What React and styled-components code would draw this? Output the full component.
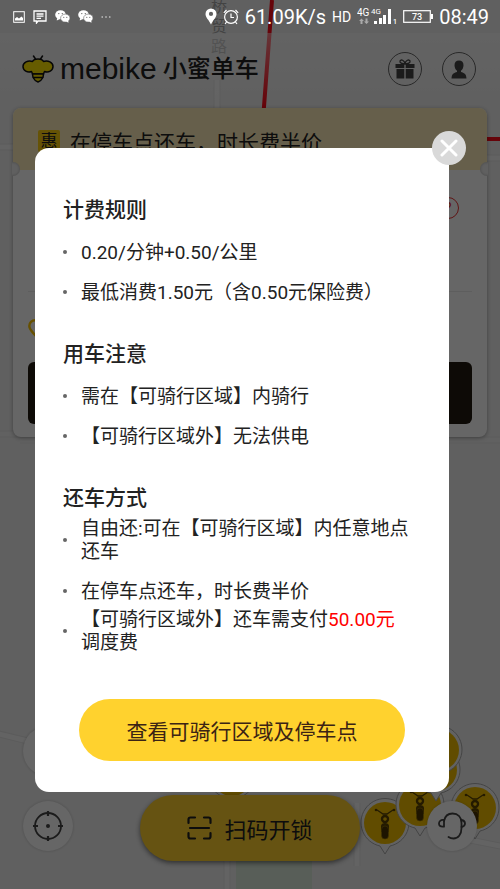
import React from 'react'
import styled, { createGlobalStyle } from 'styled-components'


const GlobalStyle = createGlobalStyle`
  * {
    box-sizing: border-box;
  }

  body {
    margin: 0;
    font-family: Roboto, "Noto Sans CJK SC", sans-serif;
    color: #222222;
    text-spacing-trim: space-all;
  }

  button {
    border: 0;
    padding: 0;
    background: none;
    font-family: inherit;
    color: inherit;
    cursor: pointer;
  }

  svg {
    display: block;
    flex: none;
  }
`

const Screen = styled.div`
  position: relative;
  display: flex;
  flex-direction: column;
  min-height: 100vh;
  overflow: hidden;
  background-color: #f0f0f0;
`

const MapLayer = styled.div`
  position: absolute;
  inset: 0;

  svg {
    width: 100%;
    height: 100%;
  }
`

const StatusBar = styled.div`
  position: relative;
  z-index: 3;
  display: flex;
  align-items: center;
  justify-content: space-between;
  height: 33px;
  padding: 0 11px 0 13px;
  color: #ffffff;
`

const StatusGroup = styled.div`
  display: flex;
  align-items: center;
  gap: ${props => props.$gap}px;
`

const StatusText = styled.span`
  font-size: ${props => props.$size || 20}px;
  line-height: 24px;
`

const Header = styled.header`
  position: relative;
  display: flex;
  align-items: center;
  justify-content: space-between;
  height: 72px;
  padding: 0 24px 0 22px;
  background: linear-gradient(rgba(255, 255, 255, 0.5), rgba(255, 255, 255, 0));
`

const Brand = styled.div`
  display: flex;
  align-items: center;
  gap: 6px;
`

const BrandName = styled.span`
  font-family: "Liberation Sans", sans-serif;
  font-size: 30px;
  line-height: 32px;
`

const BrandLabel = styled.span`
  font-size: 24px;
  font-weight: 500;
  line-height: 32px;
`

const HeaderActions = styled.div`
  display: flex;
  gap: 20px;
`

const RoundButton = styled.button`
  display: flex;
  align-items: center;
  justify-content: center;
  width: 34px;
  height: 34px;
  border: 1px solid #666666;
  border-radius: 50%;
`

const TripCard = styled.section`
  position: relative;
  height: 329px;
  margin: 3px 13px 0;
  border-radius: 8px;
  background-color: #ffffff;
  box-shadow: 0 1px 4px rgba(0, 0, 0, 0.35);
`

const Promo = styled.div`
  display: flex;
  align-items: center;
  gap: 10px;
  height: 62px;
  padding: 4px 25px 0;
  border-radius: 8px 8px 0 0;
  background-color: #ffeebc;
  font-size: 21px;
`

const PromoBadge = styled.span`
  width: 22px;
  height: 22px;
  border-radius: 2px;
  background-color: #ffcf10;
  font-size: 17px;
  line-height: 22px;
  text-align: center;
`

const Notch = styled.span`
  position: absolute;
  top: 54px;
  ${props => props.$side}: -7px;
  width: 14px;
  height: 14px;
  border-radius: 50%;
  background-color: #f0f0f0;
  box-shadow: inset 0 0 3px rgba(0, 0, 0, 0.25);
  clip-path: inset(0 ${props => (props.$side === 'right' ? '6px 0 0' : '0 0 6px')});
`

const TripBody = styled.div`
  display: flex;
  flex-direction: column;
  align-items: stretch;
  height: 267px;
  padding: 27px 15px 13px;
`

const HelpButton = styled.button`
  align-self: flex-end;
  width: 22px;
  height: 22px;
  margin-right: 13px;
  border: 1px solid #ee3333;
  border-radius: 50%;
  color: #ee3333;
  font-size: 15px;
  line-height: 20px;
`

const Divider = styled.hr`
  width: 100%;
  margin: 72px 0 27px;
  border: 0;
  border-top: 1px solid #eaeaea;
`

const TripButton = styled.button`
  height: 62px;
  margin-top: auto;
  border-radius: 6px;
  background-color: #221a10;
`

const BottomBar = styled.footer`
  position: relative;
  display: flex;
  align-items: flex-end;
  justify-content: space-between;
  margin-top: auto;
  padding: 0 23px 28px;
`

const SideTools = styled.div`
  display: flex;
  flex-direction: column;
  gap: 25px;
  padding-bottom: 10px;
`

const ToolButton = styled.button`
  display: flex;
  align-items: center;
  justify-content: center;
  width: 50px;
  height: 50px;
  border-radius: 50%;
  background-color: #ffffff;
  box-shadow: 0 0 3px rgba(0, 0, 0, 0.2);
`

const ScanButton = styled.button`
  display: flex;
  align-items: center;
  justify-content: center;
  gap: 12px;
  width: 220px;
  height: 66px;
  border-radius: 33px;
  background-color: #ffd02e;
  box-shadow: 0 2px 5px rgba(0, 0, 0, 0.5);
  font-size: 22px;
`

const Overlay = styled.div`
  position: absolute;
  inset: 0;
  z-index: 2;
  padding: 148px 51px 0 35px;
  background-color: rgba(0, 0, 0, 0.6);
`

const Dialog = styled.div`
  position: relative;
  padding: 40px 0 31px;
  border-radius: 14px;
  background-color: #ffffff;
`

const CloseButton = styled.button`
  position: absolute;
  top: -17px;
  right: -17px;
  display: flex;
  align-items: center;
  justify-content: center;
  width: 34px;
  height: 34px;
  border-radius: 50%;
  background-color: #d9d9d9;
`

const RuleSection = styled.section`
  padding: 0 36px 0 28px;

  & + & {
    margin-top: 20px;
  }
`

const RuleTitle = styled.h2`
  margin: 0;
  font-size: 21px;
  font-weight: 500;
  line-height: 44px;
`

const RuleList = styled.ul`
  margin: 0;
  padding: 0;
  list-style: none;
`

const RuleItem = styled.li`
  display: flex;
  align-items: center;
  height: 40px;
  margin-bottom: ${props => (props.$spaced ? 11 : 0)}px;
  font-size: 19px;
  line-height: 23px;

  &::before {
    content: "";
    flex: none;
    width: 4px;
    height: 4px;
    margin-right: 14px;
    border-radius: 50%;
    background-color: #666666;
  }
`

const Fee = styled.span`
  color: #ff0000;
`

const AreaButton = styled.button`
  display: block;
  width: calc(100% - 88px);
  height: 62px;
  margin: 48px 44px 0;
  border-radius: 31px;
  background-color: #ffd22e;
  color: #3b2314;
  font-size: 21px;
`

const PINS = [
  { x: 232, y: 775 },
  { x: 475, y: 808 },
  { x: 385, y: 823 },
  { x: 420, y: 805 },
  { x: 436, y: 770 },
  { x: 438, y: 750 },
]

const BikePin = ({ x, y }) => (
  <g transform={`translate(${x} ${y})`}>
    <path
      d="M-5 23 L0 31 L5 23 A24 24 0 1 0 -5 23Z"
      fill="#f4f4f4"
      stroke="#aaaaaa"
      strokeWidth="1"
    />
    <circle r="21" fill="#f2bf00" />
    <g fill="none" stroke="#5a4300" strokeWidth="1.3">
      <path d="M-8 -13 L-5 -11 L-2 -9 H2 L5 -11 L8 -13" />
      <circle r="3" cy="-4" strokeWidth="2.4" />
    </g>
    <circle cx="-9" cy="-13" r="1.3" fill="#5a4300" />
    <circle cx="9" cy="-13" r="1.3" fill="#5a4300" />
    <path d="M-4 3 C-4 -1 4 -1 4 3 L4 9 H-4Z" fill="#5a4300" />
    <rect x="-3.5" y="3" width="7" height="13" rx="3.5" fill="#4a3200" stroke="#a07c00" strokeWidth="0.6" />
  </g>
)

const MapArt = () => (
  <svg viewBox="0 0 500 889" preserveAspectRatio="xMidYMid slice" aria-hidden="true">
    <rect x="236" y="858" width="76" height="31" fill="#dcebdc" />
    <g fill="none" stroke="#e4e4e4" strokeWidth="7">
      <path d="M217 80 V120" />
      <path d="M0 147 H20" />
      <path d="M480 158 H500" />
      <path d="M0 434 H20 M20 440 H500" />
      <path d="M-5 733 L40 744" />
      <path d="M227 850 V889" />
      <path d="M357 803 V866" />
      <path d="M470 840 L505 847" />
    </g>
    <g fill="none" stroke="#f8f8f8" strokeWidth="5">
      <path d="M217 80 V120" />
      <path d="M0 147 H20" />
      <path d="M480 158 H500" />
      <path d="M-5 733 L40 744" />
      <path d="M227 850 V889" />
      <path d="M357 803 V866" />
      <path d="M470 840 L505 847" />
    </g>
    <path d="M0 434 H20 M20 440 H500" fill="none" stroke="#f2f2f2" strokeWidth="5" />
    <path d="M272 0 L263 120 M480 139 H500" fill="none" stroke="#ff0a1a" strokeWidth="4" />
    {PINS.map(pin => (
      <BikePin key={`${pin.x}-${pin.y}`} {...pin} />
    ))}
  </svg>
)

const RoadName = styled.span`
  position: absolute;
  top: -3px;
  left: 211px;
  width: 16px;
  color: #a8a8a8;
  font-size: 16px;
  line-height: 20px;
`

const PictureIcon = () => (
  <svg width="12" height="12" viewBox="0 0 12 12" fill="none" stroke="#fff">
    <rect x="0.7" y="0.7" width="10.6" height="10.6" />
    <path d="M2 9.5 V7.5 L4 6 L6 7.5 L8.5 5.5 L10 7 V9.5Z" fill="#fff" stroke="none" />
  </svg>
)

const MessageIcon = () => (
  <svg width="14" height="14" viewBox="0 0 14 14" fill="none" stroke="#fff" strokeWidth="1.3">
    <path d="M1 1 H13 V11 H5 L3.5 13 V11 H1Z M3.5 4 H10.5 M3.5 6.2 H10.5 M3.5 8.4 H8" />
  </svg>
)

const WechatIcon = () => (
  <svg width="15" height="13" viewBox="0 0 15 13">
    <ellipse cx="5.5" cy="4.7" rx="5.3" ry="4.5" fill="#fff" />
    <path d="M2 8 L1.8 10.5 L5 9Z" fill="#fff" />
    <ellipse cx="10.3" cy="8.1" rx="4.7" ry="4" fill="#fff" stroke="#666" strokeWidth="0.6" />
    <path d="M11 11.5 L13.5 12.8 L13.2 10.5Z" fill="#fff" />
    <g fill="#666">
      <circle cx="3.8" cy="3.6" r="0.7" />
      <circle cx="7.3" cy="3.6" r="0.7" />
      <circle cx="8.8" cy="7.3" r="0.6" />
      <circle cx="11.8" cy="7.3" r="0.6" />
    </g>
  </svg>
)

const DotsIcon = () => (
  <svg width="10" height="4" viewBox="0 0 10 4" fill="#ddd">
    <circle cx="1.2" cy="2" r="0.8" />
    <circle cx="5" cy="2" r="0.8" />
    <circle cx="8.8" cy="2" r="0.8" />
  </svg>
)

const PlaceIcon = () => (
  <svg width="12" height="17" viewBox="0 0 12 17">
    <path fill="#fff" fillRule="evenodd" d="M6 0.5 A5.5 5.5 0 0 1 11.5 6 C11.5 9.5 8 12 6 16.5 C4 12 0.5 9.5 0.5 6 A5.5 5.5 0 0 1 6 0.5Z M6 3.8 A2.1 2.1 0 1 0 6 8 A2.1 2.1 0 1 0 6 3.8Z" />
  </svg>
)

const AlarmIcon = () => (
  <svg width="16" height="16" viewBox="0 0 16 16" fill="none" stroke="#fff" strokeWidth="1.2">
    <circle cx="8" cy="8" r="6.4" />
    <path d="M8 4.5 V8.5 H11 M0.8 3.8 L3.5 1 M15.2 3.8 L12.5 1 M3.5 13 L2 15 M12.5 13 L14 15" />
  </svg>
)

const NetworkIcon = () => (
  <svg width="40" height="17" viewBox="0 0 40 17" fill="#fff">
    <text x="0" y="8" fontSize="10">4G</text>
    <text x="14" y="6" fontSize="8">4G</text>
    <path d="M3.5 16 V13 H2 L4.5 10.5 L7 13 H5.5 V16Z M8.5 10.5 V13.5 H7 L9.5 16 L12 13.5 H10.5 V10.5Z" fill="#aaa" />
    <rect x="17" y="13" width="3" height="3" />
    <rect x="22" y="10" width="3" height="6" />
    <rect x="26" y="7" width="3" height="9" />
    <rect x="31" y="1" width="3" height="15" />
    <text x="36" y="16" fontSize="7" fontWeight="500">1</text>
  </svg>
)

const BatteryIcon = () => (
  <svg width="30" height="13" viewBox="0 0 30 13">
    <rect x="0.7" y="0.7" width="26.6" height="11.6" fill="none" stroke="#fff" strokeWidth="1.2" />
    <rect x="28" y="4" width="2" height="5" fill="#fff" />
    <text x="14" y="10" textAnchor="middle" fontSize="9" fontWeight="500" fill="#fff">73</text>
  </svg>
)

const BeeLogo = () => (
  <svg width="32" height="28" viewBox="0 0 32 28" fill="none" stroke="#111" strokeWidth="1.5" strokeLinecap="round" strokeLinejoin="round">
    <path d="M13.5 4 L11.5 1 M18.5 4 L20.5 1" />
    <path
      d="M10.5 6.5 C12 3 20 3 21.5 6.5 C26 5 31 7.5 31 11.5 C31 15.5 26.5 18 22.5 16.5 C22 17.5 21.8 18 21.5 19 H10.5 C10.2 18 10 17.5 9.5 16.5 C5.5 18 1 15.5 1 11.5 C1 7.5 6 5 10.5 6.5Z"
      fill="#ffe600"
    />
    <path d="M10.5 19 H21.5 L21 22.5 H11Z M11 22.5 H21 C19.5 25.3 17.5 26.5 16 27 C14.5 26.5 12.5 25.3 11 22.5Z" fill="#ffe600" />
  </svg>
)

const GiftIcon = () => (
  <svg width="20" height="20" viewBox="0 0 20 20">
    <path d="M10 5 C7 5 4.5 3.8 5 2 C5.8 0 9.5 1 10 5 C10.5 1 14.2 0 15 2 C15.5 3.8 13 5 10 5Z" fill="none" stroke="#444" strokeWidth="1.3" />
    <path d="M0.5 5 H9.3 V9 H0.5Z M10.7 5 H19.5 V9 H10.7Z M1.5 10 H9.3 V19.5 H1.5Z M10.7 10 H18.5 V19.5 H10.7Z" fill="#444" />
  </svg>
)

const UserIcon = () => (
  <svg width="16" height="19" viewBox="0 0 16 19" fill="#444">
    <path d="M8 0.5 C11 0.5 12.5 2.5 12.5 5.3 C12.5 7.5 11.5 9.6 10 10.8 V12 C13 12.8 15.3 13.8 15.5 18.5 H0.5 C0.7 13.8 3 12.8 6 12 V10.8 C4.5 9.6 3.5 7.5 3.5 5.3 C3.5 2.5 5 0.5 8 0.5Z" />
  </svg>
)

const SpotIcon = () => (
  <svg width="14" height="18" viewBox="0 0 14 18" fill="none" stroke="#ffc800" strokeWidth="2.4">
    <path d="M7 16 C4.5 13 1.3 10.5 1.3 7 A5.7 5.7 0 0 1 12.7 7 C12.7 10.5 9.5 13 7 16Z" />
  </svg>
)

const LocateIcon = () => (
  <svg width="32" height="32" viewBox="0 0 32 32" fill="none" stroke="#444" strokeWidth="1.8">
    <circle cx="16" cy="16" r="13" />
    <path d="M16 1 V6 M16 26 V31 M1 16 H6 M26 16 H31" strokeWidth="2.2" />
    <circle cx="16" cy="16" r="2" fill="#444" stroke="none" />
  </svg>
)

const HeadsetIcon = () => (
  <svg width="28" height="30" viewBox="0 0 28 30" fill="none" stroke="#444" strokeWidth="1.8" strokeLinecap="round">
    <path d="M6 10 C7 5 10 2.5 14.5 2.5 C20 2.5 23.5 6 23.5 12 V17 C23.5 23.5 20 27.5 15.5 27.5 C13.5 27.5 12 27 10.5 26" />
    <path d="M6 9 V15.5 C1.5 16 1 14 1 12.5 C1 10.5 2.5 8.5 6 9Z M23.5 9 C26 9.5 27 11 27 12.5 C27 14 26 15.5 23.5 16" />
  </svg>
)

const ScanIcon = () => (
  <svg width="25" height="24" viewBox="0 0 25 24" fill="none" stroke="#222" strokeWidth="2.2" strokeLinecap="round">
    <path d="M8 1.5 H3.5 Q1.5 1.5 1.5 3.5 V7 M17 1.5 H21.5 Q23.5 1.5 23.5 3.5 V7 M8 22.5 H3.5 Q1.5 22.5 1.5 20.5 V17 M17 22.5 H21.5 Q23.5 22.5 23.5 20.5 V17 M3 12 H22" />
  </svg>
)

const CloseIcon = () => (
  <svg width="18" height="18" viewBox="0 0 18 18" fill="none" stroke="#fff" strokeWidth="3" strokeLinecap="round">
    <path d="M2 2 L16 16 M16 2 L2 16" />
  </svg>
)

const RulesDialog = () => (
  <Dialog role="dialog" aria-modal="true">
    <CloseButton aria-label="关闭">
      <CloseIcon />
    </CloseButton>
    <RuleSection>
      <RuleTitle>计费规则</RuleTitle>
      <RuleList>
        <RuleItem>0.20/分钟+0.50/公里</RuleItem>
        <RuleItem>最低消费1.50元（含0.50元保险费）</RuleItem>
      </RuleList>
    </RuleSection>
    <RuleSection>
      <RuleTitle>用车注意</RuleTitle>
      <RuleList>
        <RuleItem>需在【可骑行区域】内骑行</RuleItem>
        <RuleItem>【可骑行区域外】无法供电</RuleItem>
      </RuleList>
    </RuleSection>
    <RuleSection>
      <RuleTitle>还车方式</RuleTitle>
      <RuleList>
        <RuleItem $spaced>自由还:可在【可骑行区域】内任意地点还车</RuleItem>
        <RuleItem>在停车点还车，时长费半价</RuleItem>
        <RuleItem>
          <span>
            【可骑行区域外】还车需支付<Fee>50.00元</Fee>调度费
          </span>
        </RuleItem>
      </RuleList>
    </RuleSection>
    <AreaButton>查看可骑行区域及停车点</AreaButton>
  </Dialog>
)

const App = () => (
  <Screen>
    <GlobalStyle />
    <MapLayer>
      <MapArt />
      <RoadName>桥贸路</RoadName>
    </MapLayer>
    <StatusBar>
      <StatusGroup $gap={8}>
        <PictureIcon />
        <MessageIcon />
        <WechatIcon />
        <WechatIcon />
        <DotsIcon />
      </StatusGroup>
      <StatusGroup $gap={6}>
        <PlaceIcon />
        <AlarmIcon />
        <StatusText>61.09K/s</StatusText>
        <StatusText $size={14}>HD</StatusText>
        <NetworkIcon />
        <BatteryIcon />
        <StatusText>08:49</StatusText>
      </StatusGroup>
    </StatusBar>
    <Header>
      <Brand>
        <BeeLogo />
        <BrandName>mebike</BrandName>
        <BrandLabel>小蜜单车</BrandLabel>
      </Brand>
      <HeaderActions>
        <RoundButton aria-label="礼物">
          <GiftIcon />
        </RoundButton>
        <RoundButton aria-label="我的">
          <UserIcon />
        </RoundButton>
      </HeaderActions>
    </Header>
    <TripCard>
      <Promo>
        <PromoBadge>惠</PromoBadge>
        在停车点还车，时长费半价
      </Promo>
      <Notch $side="left" />
      <Notch $side="right" />
      <TripBody>
        <HelpButton>?</HelpButton>
        <Divider />
        <SpotIcon />
        <TripButton aria-label="用车" />
      </TripBody>
    </TripCard>
    <BottomBar>
      <SideTools>
        <ToolButton aria-label="刷新" />
        <ToolButton aria-label="定位">
          <LocateIcon />
        </ToolButton>
      </SideTools>
      <ScanButton>
        <ScanIcon />
        扫码开锁
      </ScanButton>
      <SideTools>
        <ToolButton aria-label="客服">
          <HeadsetIcon />
        </ToolButton>
      </SideTools>
    </BottomBar>
    <Overlay>
      <RulesDialog />
    </Overlay>
  </Screen>
)

export default App
